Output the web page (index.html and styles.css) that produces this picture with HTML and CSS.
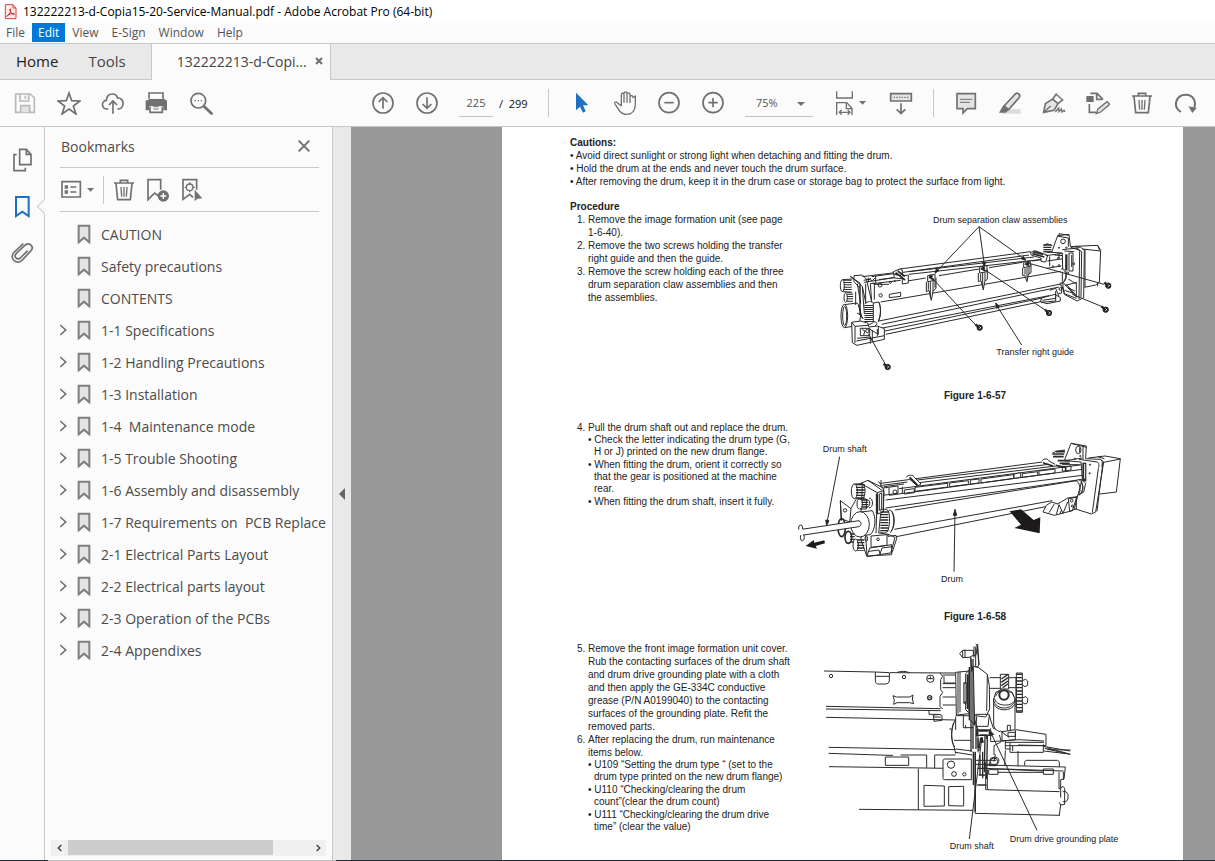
FILE: index.html
```html
<!DOCTYPE html>
<html lang="en">
<head>
<meta charset="utf-8">
<title>132222213-d-Copia15-20-Service-Manual.pdf - Adobe Acrobat Pro (64-bit)</title>
<link rel="stylesheet" href="styles.css">
</head>
<body>
<svg class="defs" aria-hidden="true">
  <symbol id="bm" viewBox="0 0 42 60"><path class="soft" d="M5 5h32v50L21 41 5 55z" stroke-width="6"/></symbol>
  <symbol id="chev" viewBox="0 0 24 36"><path d="M4 3l16 15L4 33" stroke-width="5"/></symbol>
  <symbol id="trash" viewBox="0 0 72 72"><path d="M6 15h60M25 13V7h22v6M12 17l5 48h38l5-48" /><path d="M27 27l2 29M36 27v29M45 27l-2 29" stroke-width="4"/></symbol>
  <symbol id="screw" viewBox="-12 -12 24 24"><path d="M-10-8L6 8" stroke-width="7"/><circle r="8" cx="2" cy="2" fill="#222"/><path d="M0 6l6-5M1-2l5 5" stroke="#fff" stroke-width="2"/></symbol>
</svg>

<header>
  <div class="title">
    <svg class="app" viewBox="0 0 39 48"><path d="M4 2h23l9 10v32H4z" fill="#fbe9e7" stroke="#d3443a" stroke-width="3"/><path d="M27 2v10h9" fill="none" stroke="#d3443a" stroke-width="3"/><path d="M9 36c6-2 12-12 11-20-1-3-4-1-2 4 3 8 9 13 13 11 3-4-12-4-20 3-3 3-3 4-2 2z" fill="none" stroke="#c9211e" stroke-width="3"/></svg>
    <h1>132222213-d-Copia15-20-Service-Manual.pdf - Adobe Acrobat Pro (64-bit)</h1>
  </div>
  <nav class="menu" aria-label="Menu bar">
    <button>File</button><button class="on">Edit</button><button>View</button><button>E-Sign</button><button>Window</button><button>Help</button>
  </nav>
  <nav class="tabs" aria-label="Tabs">
    <button class="tab home">Home</button><button class="tab tools">Tools</button>
    <div class="tab doc"><span>132222213-d-Copi...</span><button aria-label="Close tab"><svg class="ic" viewBox="0 0 24 24"><path d="M3 3l18 18M21 3L3 21" stroke-width="6"/></svg></button></div>
  </nav>
  <div class="toolbar" role="toolbar" aria-label="Main toolbar">
    <div class="group files">
      <button aria-label="Save"><svg class="ic faded" viewBox="39 273 72 72"><path d="M47 282h44l12 12v43H47z"/><path d="M60 283v20h26v-20M76 287v10"/><path class="soft" d="M62 337v-20h27v20"/></svg></button>
      <button aria-label="Star"><svg class="ic" viewBox="171 273 72 72"><path d="M207 279l8 23 25 1-20 15 8 24-21-15-21 15 8-24-20-15 25-1z"/></svg></button>
      <button aria-label="Upload"><svg class="ic" viewBox="303 273 72 72"><path d="M325 327h-3a13 13 0 0 1-3-26c1-12 8-19 18-19 9 0 14 5 16 12 20-2 22 30 3 33h-4M339 341v-36M327 315l12-12 12 12"/></svg></button>
      <button aria-label="Print"><svg class="ic" viewBox="435 273 72 72"><path fill="#707070" stroke="none" d="M437 301h7l4-5h45l4 5h4v30h-11v-12h-43v12h-10z"/><path d="M447 296v-17h42v17M450 320v17h37v-17" fill="#fbfbfb"/><path d="M460 320h16M460 327h16" stroke-width="3"/></svg></button>
      <button aria-label="Find"><svg class="ic" viewBox="567 273 72 72"><circle cx="595" cy="302" r="22"/><path d="M611 318l26 25" stroke-width="8"/><path d="M584 302h4M593 302h4M602 302h4" stroke-width="4"/></svg></button>
    </div>
    <div class="group">
      <button aria-label="Previous page"><svg class="ic" viewBox="33 33 72 72"><circle cx="69" cy="69" r="30"/><path d="M69 86V54M56 66l13-13 13 13"/></svg></button>
      <button aria-label="Next page"><svg class="ic" viewBox="165 33 72 72"><circle cx="201" cy="69" r="30"/><path d="M201 52v32M188 72l13 13 13-13"/></svg></button>
      <input class="pageno" aria-label="Page number" value="225"><span class="total">/&nbsp; 299</span>
    </div>
    <div class="group ruled">
      <button aria-label="Select"><svg class="ic" viewBox="627 33 72 72"><path d="M648 38v53l12-11 9 18 8-4-8-18h16z" fill="#1f6fc0" stroke="none"/></svg></button>
      <button aria-label="Hand"><svg class="ic" viewBox="759 33 72 72"><path d="M784 78V45c0-7 8-7 8 0v23V41c0-7 9-7 9 0v27-24c0-7 9-7 9 0v25-17c0-7 9-7 9 0v0l7-3v25c-1 20-10 29-27 29-14 0-20-8-25-17l-9-14c-3-6 3-8 7-4l12 10" stroke-width="4"/></svg></button>
      <button aria-label="Zoom out"><svg class="ic" viewBox="891 33 72 72"><circle cx="927" cy="68" r="30"/><path d="M913 68h28"/></svg></button>
      <button aria-label="Zoom in"><svg class="ic" viewBox="1023 33 72 72"><circle cx="1059" cy="68" r="30"/><path d="M1045 68h28M1059 54v28"/></svg></button>
      <span class="zoom"><select aria-label="Zoom"><option>75%</option></select></span>
      <button class="wide" aria-label="Fit page"><svg class="ic" viewBox="54 33 108 72"><path d="M65 34v20h47V34M65 105V68h30l16 17v20M94 69v17h17M74 97h30M80 90l-7 7 7 7M98 90l7 7-7 7" stroke-width="4"/><path d="M132 63h21l-10 11z" fill="#707070" stroke="none"/></svg></button>
      <button aria-label="Keyboard"><svg class="ic" viewBox="222 33 72 72"><path class="soft" d="M227 41h62v22h-62z"/><path d="M236 52h46" stroke-width="4" stroke-dasharray="4 4"/><path d="M258 70v29M245 88l13 13 13-13"/></svg></button>
    </div>
    <div class="group ruled">
      <button aria-label="Comment"><svg class="ic" viewBox="417 33 72 72"><path class="soft" d="M426 41h55v45h-24l-13 13V86h-18z"/><path d="M435 58h37M435 67h30" stroke-width="3"/></svg></button>
      <button aria-label="Highlight"><svg class="ic" viewBox="549 33 72 72"><path d="M572 87h45v14h-58z" fill="#ddd" stroke="none"/><path class="soft" d="M567 78l35-37c5-4 16 3 11 11l-32 37z"/><path d="M552 98l13-22 17 14-10 8z" fill="#707070" stroke="none"/></svg></button>
      <button aria-label="Sign"><svg class="ic" viewBox="681 33 72 72"><path class="soft" d="M686 97l5-26 22-14 16 14-12 20zM713 57l12-16M729 71l15-12"/><path d="M687 96l20-18M722 41l22 20" stroke-width="4"/><path d="M721 96l10-12 1 11 7-8 2 9 6-5 3 5" stroke-width="4"/></svg></button>
      <button aria-label="Edit PDF"><svg class="ic" viewBox="813 33 72 72"><path d="M826 40h20l18 18M845 41v17h18M823 72v25h20"/><path d="M814 48h22v18h-22z" fill="#707070" stroke="none"/><path class="soft" d="M844 101l5-14 27-22 8 8-27 23z" stroke-width="4"/></svg></button>
      <button aria-label="Delete"><svg class="ic"><use href="#trash"/></svg></button>
      <button aria-label="Rotate"><svg class="ic" viewBox="1077 33 72 72"><path d="M1098 96c-28-18-13-52 14-52 24 0 33 22 25 42" stroke-width="6"/><path d="M1120 79l25 5-13 15z" fill="#707070" stroke="none"/></svg></button>
    </div>
  </div>
</header>

<div class="work">
  <nav class="rail" aria-label="Panels">
    <button aria-label="Thumbnails"><svg class="ic" viewBox="-3 -1 72 72"><path d="M26 3h20l14 15v31H26zM46 3v15h14M17 19H9v48h34v-9"/></svg></button>
    <button class="on" aria-label="Bookmarks"><svg class="ic blue" viewBox="0 -4 72 72"><path d="M18 5h38v57L37 49 18 62z" stroke-width="6"/></svg></button>
    <button aria-label="Attachments"><svg class="ic" viewBox="0 0 72 72"><path d="M53 32L31 54c-10 8-21-4-12-14l27-25c13-10 27 5 17 17L36 61C20 74-2 58 11 38L40 11"/></svg></button>
  </nav>
  <aside class="panel">
    <div class="head"><h2>Bookmarks</h2><button aria-label="Close panel"><svg class="ic" viewBox="0 0 42 42"><path d="M5 5l32 32M37 5L5 37" stroke-width="6"/></svg></button></div>
    <div class="tools-row">
      <button aria-label="Options"><svg class="ic opt" viewBox="183 158 105 72"><path d="M186 169h55v46h-55z"/><path d="M194 185h12M194 200h12" stroke-width="10" stroke-dasharray="10 9"/><path d="M211 185h18M211 200h18"/><path d="M261 188h21l-10 11z" fill="#707070" stroke="none"/></svg></button>
      <button class="cut" aria-label="Delete bookmark"><svg class="ic"><use href="#trash"/></svg></button>
      <button aria-label="New bookmark"><svg class="ic" viewBox="437 156 72 72"><path d="M475 210l-12-9-20 20v-60h38v30"/><circle cx="489" cy="210" r="17" fill="#707070" stroke="none"/><path d="M480 210h18M489 201v18" stroke="#fff" stroke-width="4"/></svg></button>
      <button aria-label="Find bookmark"><svg class="ic" viewBox="542 156 72 72"><path d="M581 214l-10-9-20 15v-59h41v30"/><circle cx="571" cy="184" r="10" stroke-width="4"/><path d="M571 169v7M571 192v7M556 184h7M579 184h7" stroke-width="4"/><path d="M586 191v35l8-8 15-1z" fill="#707070" stroke="none"/></svg></button>
    </div>
    <ul class="tree">
      <li><i></i><svg class="ic mark"><use href="#bm"/></svg><a href="#">CAUTION</a></li>
      <li><i></i><svg class="ic mark"><use href="#bm"/></svg><a href="#">Safety precautions</a></li>
      <li><i></i><svg class="ic mark"><use href="#bm"/></svg><a href="#">CONTENTS</a></li>
      <li><svg class="ic chev"><use href="#chev"/></svg><svg class="ic mark"><use href="#bm"/></svg><a href="#">1-1 Specifications</a></li>
      <li><svg class="ic chev"><use href="#chev"/></svg><svg class="ic mark"><use href="#bm"/></svg><a href="#">1-2 Handling Precautions</a></li>
      <li><svg class="ic chev"><use href="#chev"/></svg><svg class="ic mark"><use href="#bm"/></svg><a href="#">1-3 Installation</a></li>
      <li><svg class="ic chev"><use href="#chev"/></svg><svg class="ic mark"><use href="#bm"/></svg><a href="#">1-4&nbsp; Maintenance mode</a></li>
      <li><svg class="ic chev"><use href="#chev"/></svg><svg class="ic mark"><use href="#bm"/></svg><a href="#">1-5 Trouble Shooting</a></li>
      <li><svg class="ic chev"><use href="#chev"/></svg><svg class="ic mark"><use href="#bm"/></svg><a href="#">1-6 Assembly and disassembly</a></li>
      <li><svg class="ic chev"><use href="#chev"/></svg><svg class="ic mark"><use href="#bm"/></svg><a href="#">1-7 Requirements on&nbsp; PCB Replace</a></li>
      <li><svg class="ic chev"><use href="#chev"/></svg><svg class="ic mark"><use href="#bm"/></svg><a href="#">2-1 Electrical Parts Layout</a></li>
      <li><svg class="ic chev"><use href="#chev"/></svg><svg class="ic mark"><use href="#bm"/></svg><a href="#">2-2 Electrical parts layout</a></li>
      <li><svg class="ic chev"><use href="#chev"/></svg><svg class="ic mark"><use href="#bm"/></svg><a href="#">2-3 Operation of the PCBs</a></li>
      <li><svg class="ic chev"><use href="#chev"/></svg><svg class="ic mark"><use href="#bm"/></svg><a href="#">2-4 Appendixes</a></li>
    </ul>
    <div class="hscroll"><button aria-label="Scroll left"><svg class="ic" viewBox="0 0 24 24"><path d="M16 3l-9 9 9 9" stroke-width="5"/></svg></button><div class="track"><div class="thumb"></div></div><button aria-label="Scroll right"><svg class="ic" viewBox="0 0 24 24"><path d="M8 3l9 9-9 9" stroke-width="5"/></svg></button></div>
  </aside>
  <button class="splitter" aria-label="Collapse panel"></button>
  <main>
    <article class="page">
      <h3>Cautions:</h3>
      <ul class="dots">
        <li>Avoid direct sunlight or strong light when detaching and fitting the drum.</li>
        <li>Hold the drum at the ends and never touch the drum surface.</li>
        <li>After removing the drum, keep it in the drum case or storage bag to protect the surface from light.</li>
      </ul>
      <section>
        <div>
          <h3>Procedure</h3>
          <ol>
            <li>Remove the image formation unit (see page<br>1-6-40).</li>
            <li>Remove the two screws holding the transfer<br>right guide and then the guide.</li>
            <li>Remove the screw holding each of the three<br>drum separation claw assemblies and then<br>the assemblies.</li>
          </ol>
        </div>
        <figure>
          <svg class="art" viewBox="-96 -15 1068 555">
            <path d="M128 215L600 150M212 192L605 140M240 200L615 156M240 208L640 163M150 224L215 215M130 236L215 226M235 228L290 219M330 212L450 192M480 188L580 172M610 168L650 162"/>
            <path d="M155 291L700 198M150 348L700 236M158 358L690 246M145 372L660 272M168 378L640 279M170 388L635 290M140 385L168 378"/>
            <path d="M100 215l98-12M105 232l90-14M135 238h45M118 218v14M140 212v24" />
            <path d="M75 212l25-2 12 12 16 68M65 214l35 30 10 48M75 212v18l18 20M93 240v90l10 12M110 236v60M128 290l-4-54 12-2v50M118 222l12 5 8-8M85 236l10 60M100 246l6 80M88 300l12 40M104 226l22-5M80 260v40"/>
            <path d="M63 214l30 20v95l-22-12" />
            <ellipse cx="40" cy="242" rx="6" ry="18" fill="#fff"/><path d="M56 224v36" stroke-width="24" stroke-dasharray="3 4"/><path d="M40 224l30-2M42 260l28 4"/>
            <ellipse cx="50" cy="278" rx="5" ry="14"/><path d="M63 266v28" stroke-width="18" stroke-dasharray="3 4"/>
            <path d="M46 300h38v62H46z" fill="#fff" stroke="none"/><path d="M46 299l38-5c14 12 14 50 2 68l-40 6"/><ellipse cx="46" cy="333" rx="10" ry="35" fill="#fff"/><ellipse cx="47" cy="333" rx="6" ry="29" fill="#fff"/>
            <path d="M119 300v52" stroke-width="26" stroke-dasharray="3 3"/><path d="M107 296c10-9 20-7 26-2v58c-8 8-20 8-28 0M133 294l16-3c8 16 8 44-2 60M150 292c7 16 5 40-2 56"/>
            <path d="M68 352l26-4 22 6 4 12 26-3 20 8v32l-82 18-14-8z" fill="#fff"/><path d="M68 352l10 12v50M78 364l40-3M94 370h28v22H94zM82 408l84-16M118 370l30 18v-25M84 400l40-4v20M130 376v34M145 372v22M134 350c12 0 12 10 4 12"/><circle cx="115" cy="378" r="5"/><path d="M100 374l8 4-4 12"/>
            <circle cx="153" cy="240" r="6"/><circle cx="155" cy="271" r="5"/><path d="M181 268l34-6v12l-34 4z"/><circle cx="184" cy="232" r="3"/><circle cx="197" cy="228" r="2"/>
            <path d="M193 200l20-8 7 3v18l18-3v24l-18 3v-16l-24-2z" fill="#fff"/><path d="M200 203l28 22M206 198l22 16M196 207l20 5" stroke-width="5"/>
            <path d="M296 212l22-4v18l-22 4zM292 230v30l8-4 7 30 5-28 9-8v-32M298 232v22M304 230v48M312 228v30M318 226v22M452 186l22-4v18l-22 4zM448 204v26l8-3 7 28 4-26 8-6v-30M455 206v20M461 204v44M468 202v26M584 172l20-4v16l-20 4zM581 188v24l6-2 7 20 4-22 8-5v-26M588 190v18M594 188v32M600 186v22" fill="#fff"/>
            <path d="M300 216l14 8M456 190l14 8M588 176l12 6" stroke-width="6"/><circle cx="306" cy="214" r="4" fill="#222"/><circle cx="463" cy="190" r="4" fill="#222"/><circle cx="597" cy="174" r="4" fill="#222"/>
            <path d="M604 143l14-6 38 14-6 20-14-2v-10l-28-8z" fill="#fff"/><path d="M610 146l36 10M612 140l30 8" stroke-width="5"/>
            <path d="M655 118v24" stroke-width="24" stroke-dasharray="4 3"/><path d="M644 122l10-6 16 6M644 140l26 2"/>
            <path d="M655 142l50-8M650 152l60-8M655 168l55-8M652 190l45-7M662 154v30M676 150l26 2v34M690 140v20"/><circle cx="688" cy="160" r="3"/><circle cx="690" cy="182" r="3"/><circle cx="706" cy="160" r="2"/><circle cx="672" cy="184" r="2"/>
            <path d="M668 142l18-50 34-4 4 36 30 2 12 10-2 142-20 10-38-20-4-24-2-100z" fill="#fff"/><path d="M684 93l34 6v26M690 90v-4l30 5M724 126l28 10-2 146M740 128l18 12-2 136M700 134l52-6"/><circle cx="702" cy="109" r="7"/><circle cx="690" cy="128" r="2"/><circle cx="712" cy="128" r="2"/>
            <path d="M712 148v48" stroke-width="7"/><path d="M720 144h12v54h-12zM728 150v36M706 138l30 2"/><circle cx="734" cy="176" r="3"/><circle cx="716" cy="204" r="3"/>
            <path d="M736 124l70-3 9 15-4 96-11 8-34 7M760 132l54 6M812 136l-6-14M768 132v114M806 232v12"/>
            <path d="M696 192c12-2 18 8 16 20 0 16-10 24-20 22M704 196c10 8 8 28-4 38M700 200v30" fill="#fff"/>
            <path d="M704 234l40 44M708 242l34-10v44M716 248l22 10M700 246l6 20 36 14M712 238l28 32M706 256l32 10M718 222l22 14"/>
            <path d="M638 279l40-11 16 10v10l-40 8-20-6zM640 286l40-6v-22M662 256l18-6 10 24M690 238l8 4v22l-10 2M636 292l44-4v-16"/><circle cx="694" cy="252" r="4"/>
            <path d="M450 65L320 202M450 65L466 178M450 65L586 162M312 222L440 360M470 196L650 316M604 176L825 238M730 268L822 306M118 386L168 476M502 300L578 420" />
            <path d="M325 196l-2-8-5 17 12-9zM466 184l-6-12h10zM590 166l-14-5 7-7zM500 294l3 16 8-6z" fill="#222"/>
            <use href="#screw" x="438" y="354" width="24" height="24"/><use href="#screw" x="646" y="310" width="24" height="24"/><use href="#screw" x="824" y="228" width="24" height="24"/><use href="#screw" x="816" y="300" width="24" height="24"/><use href="#screw" x="162" y="472" width="24" height="24"/>
            <text x="312" y="53">Drum separation claw assemblies</text><text x="502" y="449">Transfer right guide</text>
          </svg>
          <figcaption>Figure 1-6-57</figcaption>
        </figure>
      </section>
      <section>
        <ol start="4">
          <li>Pull the drum shaft out and replace the drum.
            <ul class="dots">
              <li>Check the letter indicating the drum type (G,<br>H or J) printed on the new drum flange.</li>
              <li>When fitting the drum, orient it correctly so<br>that the gear is positioned at the machine<br>rear.</li>
              <li>When fitting the drum shaft, insert it fully.</li>
            </ul>
          </li>
        </ol>
        <figure>
          <svg class="art" viewBox="24 -27 1068 555">
            <path d="M275 160L760 96M280 166L355 156M385 150L780 103M390 158L800 108M330 176L880 104M300 196L880 118M290 210L880 136M290 234L880 148M318 240L862 152M316 298L790 212M312 322L770 230" />
            <path d="M346 180l30-4v12l-30 4zM378 172l98-12v11l-98 13zM482 159l56-7v11l-56 7zM544 150l26-3v12l-26 3zM576 147l98-13v11l-98 14zM700 131l46-6v11l-46 6zM750 123l48-6v12l-48 6zM820 112l26-4v12l-26 4z"/>
            <path d="M268 154l14 20 45-6v22l-46 6M276 150v22M284 176v18M300 174v20M340 170v20M345 162l-60 8"/><circle cx="318" cy="186" r="6"/>
            <path d="M352 142c4-9 22-8 24 0l20 20-10 6-24-20" fill="#fff"/><path d="M362 142l24 24" stroke-width="6"/>
            <path d="M675 132l20-4v14l-20 3zM760 92c4-8 18-6 20 1l18 10" fill="#fff"/><path d="M762 98l30 10M800 106l30 6v12" stroke-width="5"/>
            <path d="M215 160l22-9 44 22 4 12-2 60-8 6-6 58 28 4v6l24-3 2 10-14 42-75 12-18-50 0-80 4-82z" fill="#fff"/>
            <path d="M215 160l50 28-4 122M237 151l42 30M265 188l18-6v64l-18 6zM271 192l7-3v50l-7 2z"/><path d="M264 192v58" stroke-width="7"/>
            <ellipse cx="196" cy="184" rx="9" ry="22" fill="#fff"/><path d="M214 162v44" stroke-width="26" stroke-dasharray="4 4"/><path d="M196 162l26-1c8 10 8 34 0 45l-24 1"/>
            <ellipse cx="212" cy="222" rx="8" ry="15" fill="#fff"/><path d="M228 208v28" stroke-width="20" stroke-dasharray="4 3"/><path d="M212 207h20v30h-18M240 204c14 0 14 30 0 30M238 210c6 2 6 16 0 20"/>
            <path d="M154 212l32 24-4 40-26-10zM154 212l4 60M186 236l14-26" fill="#fff"/><circle cx="168" cy="241" r="5"/>
            <ellipse cx="158" cy="293" rx="11" ry="27" stroke-width="5"/><ellipse cx="178" cy="322" rx="10" ry="18" stroke-width="5"/>
            <path d="M214 246l36-4c12 18 10 58-6 72l-36 4" fill="#fff"/><ellipse cx="213" cy="283" rx="28" ry="38" fill="#fff"/>
            <path d="M286 244v64" stroke-width="24" stroke-dasharray="4 4"/><path d="M274 240c8-4 18-3 24 2 6 20 4 46-2 62-8 6-18 6-24 0M300 240c16-2 20 50 4 68M306 242c14 12 12 50 0 62"/>
            <path d="M190 310v30" stroke-width="14" stroke-dasharray="4 4"/><ellipse cx="200" cy="345" rx="8" ry="18" fill="#fff"/><path d="M215 328v34" stroke-width="22" stroke-dasharray="4 4"/>
            <path d="M38 298L210 272c8 4 8 14 0 18L38 316z" fill="#fff"/><ellipse cx="35" cy="294" rx="6" ry="9" fill="#fff"/><ellipse cx="40" cy="322" rx="6" ry="10" fill="#fff"/><ellipse cx="36" cy="306" rx="8" ry="10" fill="#fff" stroke="none"/>
            <path d="M246 318l48-4v32l-48 6zM230 316l4 62M234 378l8-24 66-10v30zM240 364l30-4 3 12M273 372l6-18 30-4M296 312l22 10-12 44"/><circle cx="267" cy="328" r="4"/><ellipse cx="232" cy="326" rx="4" ry="8"/>
            <path d="M826 92l20-52 46 8-2 38 44 2 10 8-24 150-12 6-52-16 24-90-4-50z" fill="#fff"/><path d="M846 40l46 12M882 48v40M870 88l54 8c8 2 6 10 4 20L910 248M934 88c8 4 6 12 4 22M942 96L924 244M830 92l50-8"/><ellipse cx="868" cy="60" rx="8" ry="11"/><path d="M872 52v16" /><circle cx="858" cy="86" r="2"/><circle cx="874" cy="78" r="2"/><circle cx="903" cy="104" r="2"/><circle cx="902" cy="130" r="2"/>
            <path d="M886 98v56" stroke-width="12"/><path d="M887 102v44" stroke="#fff" stroke-width="3"/>
            <path d="M790 72h36M792 80h32M800 65h28M806 92h36M812 100h30" stroke-width="5"/><path d="M800 64l28-4M790 70l10-6M820 104h52"/>
            <path d="M898 84l50-6 46 8-12 100-50 6M944 97l50-10M926 80l20 6"/>
            <path d="M858 152c16 0 22 36 6 46M868 148c18 6 18 38 2 48M880 150l10 10-6 26-14 8M876 158c8 8 6 22 0 32"/>
            <path d="M772 226l-10 20 34 10 54-14 14-42-28 4-30 18-18-6zM780 248l16-26M802 254l8-30 12 26 14-34M812 252l6-12" fill="#fff"/><circle cx="848" cy="212" r="4"/><circle cx="850" cy="228" r="3"/><path d="M838 206l24-4v34l-20 8z"/>
            <path d="M662 244l34-6 38 32 20-8-2 48-76-16 20-10z" fill="#1d1a1b" stroke="none"/><path d="M50 348l24-18 2 8 30-7 2 9-28 8 4 8z" fill="#1d1a1b" stroke="none"/>
            <path d="M152 80L114 278M495 425L498 246"/><path d="M113 286l-3-16 10 2zM498 238l-5 18h10z" fill="#222"/>
            <text x="101" y="65">Drum shaft</text><text x="456" y="456">Drum</text>
          </svg>
          <figcaption>Figure 1-6-58</figcaption>
        </figure>
      </section>
      <section>
        <ol start="5">
          <li>Remove the front image formation unit cover.<br>Rub the contacting surfaces of the drum shaft<br>and drum drive grounding plate with a cloth<br>and then apply the GE-334C conductive<br>grease (P/N A0199040) to the contacting<br>surfaces of the grounding plate. Refit the<br>removed parts.</li>
          <li>After replacing the drum, run maintenance<br>items below.
            <ul class="dots">
              <li>U109 “Setting the drum type “ (set to the<br>drum type printed on the new drum flange)</li>
              <li>U110 “Checking/clearing the drum<br>count”(clear the drum count)</li>
              <li>U111 “Checking/clearing the drum drive<br>time” (clear the value)</li>
            </ul>
          </li>
        </ol>
        <figure>
          <svg class="art tall" viewBox="-51 21 1068 651">
            <path d="M30 108L184 111M228 113L425 114M36 214L380 221M36 222L380 227M36 247L425 255M44 337L425 344M44 355L225 361M45 395L470 401M135 523L478 526M313 401V525"/>
            <path d="M184 111v24c0 10 4 12 10 12h20c8 0 12-4 12-12v-22zM184 124h42M250 112c12-4 26-4 36 1M378 114l8 10-6 10v30l6 8-8 12v30l8 8M386 120h39M386 146h39M386 158h39M386 186h39M386 210h39M345 225v13h26M358 240l20-2 6 4v14l-24 3zM358 246h22M390 124v20h34"/>
            <circle cx="51" cy="123" r="5"/><circle cx="270" cy="126" r="5"/><circle cx="349" cy="131" r="11"/><path d="M340 131h18M349 124v8"/><circle cx="347" cy="188" r="6" stroke-width="4"/><path d="M345 188h5"/>
            <path d="M237 182l10 4 4 0h36l10-6-2 12 4 14-12-3h-38l-10 5 2-12z"/>
            <path d="M425 112l40-4v128l-38 4zM432 112v124M438 110v122M465 106l-10 10v108l8 8"/><path d="M453 142v64" stroke-width="10"/><path d="M453 146v54" stroke="#fff" stroke-width="3"/><path d="M461 118v104" stroke-width="6"/>
            <path d="M425 242h40M425 254c-14 18-16 60-4 84l4 18M420 262c-10 20-10 56 2 74M420 316h50M425 342l50 6M425 352l50 8M412 282h-6M448 240v38h30M455 270v10M425 245v40"/>
            <path d="M446 46l-9 10 9 12 32-2V46zM446 46v22M453 44v25" fill="#fff"/><path d="M470 64l16-4 5-32 4 60-4 8-14-2-4 16z" fill="#fff"/><path d="M485 28l4 2 6 60M480 34v34M485 35v60"/>
            <path d="M477 72v270M471 70v280M466 96v160M482 100v170" stroke-width="4"/><path d="M478 94l16 4 26 20 6 34 1 70-12 24-30-4-4-8z" fill="#fff"/><path d="M520 118l-2 110M486 238h36M488 244l-2 30h36l4-34M470 256l22 26v70M480 250l12 34M524 236l14 44 22 8 26 20M530 280v40"/>
            <path d="M490 285h36v16h-36zM494 288h28M498 300h20v12M492 310v28M486 276v66M500 308l-6 40M513 302l-2 110M520 302l-2 130" stroke-width="4"/>
            <path d="M527 128h32M527 160h34M584 128h22M584 158h22"/><path d="M559 118h25v44h-25z" fill="#fff"/><path d="M562 132l20-14M562 142l20-14M562 152l20-14M566 158l16-12" stroke-width="4"/>
            <path d="M607 114h18v118h-18z" fill="#fff"/><path d="M616 116v114" stroke-width="18" stroke-dasharray="4 6"/><path d="M627 136l8-3 6 5v13l-8 4-6-4M627 188l8-3 6 5v13l-8 4-6-4M606 128v88" fill="#fff"/>
            <path d="M539 195v72c0 14 8 18 20 24M603 195v88M538 195l8-24h48l10 24c-8 30-56 34-66 0zM540 208c10 22 52 22 62 0" fill="#fff"/><circle cx="570" cy="180" r="14" stroke-width="6" fill="#fff"/><path d="M545 184c8-24 48-26 54 0M542 190c0 24 58 30 62 0M550 170l14-8"/>
            <path d="M564 290l40-6v30l-40 4zM580 286v-15h9v14M582 292h22v12h-22zM606 284l90 14v34l-84-2M530 320l84-6 76 4M574 322h116M574 332h116M588 324v28h100v-24M596 332v16M574 318v24h16M556 300l6 20-22 12v28"/>
            <path d="M688 334l80 14M692 340l74 18M690 348l66 8M700 344l70 1M698 338l72 20"/>
            <path d="M612 348v46M574 346l-2 44M544 358l-4 22M486 376h60M486 388h62M530 370c22-10 34 4 16 22h-20z"/><circle cx="540" cy="380" r="11"/>
            <path d="M510 390l244 6-4 36-10 2v54M510 400l238 8M524 404h28v14h-28zM688 402h30v16h-30zM550 402l140 6M550 412h138M632 392v-10c0-4 3-6 6-6h92c4 0 6 4 6 8v12M515 380v84M515 464l222 6M520 404v58M735 410v52l12-8 5 6v48l-12 2-4-8M746 470h10l6 8v14l-6 8h-10M740 510l-4 30M483 535l255 6M483 352v182M748 410v24" />
            <path d="M214 366h70v25h-70zM225 361h12M260 360h78v38M362 400v-40h62"/><path d="M392 372h80v62h-80c-4 0-5-2-5-6v-50c0-4 2-6 5-6z" fill="#fff"/><circle cx="411" cy="389" r="11"/><circle cx="420" cy="417" r="7"/><circle cx="451" cy="418" r="5"/><path d="M330 451l61 2v60l-61 1zM404 455l45-1v59l-45-1z"/>
            <path d="M478 350v100M484 350v180M490 400h28M494 420h20M490 450h28M498 360v60M506 350v80" stroke-width="4"/>
            <path d="M503 312L466 612M530 292L669 586"/><path d="M504 306l-5 16h9zM527 286l3 16 9-4z" fill="#222"/>
            <text x="407" y="641">Drum shaft</text><text x="587" y="620">Drum drive grounding plate</text>
          </svg>
        </figure>
      </section>
    </article>
  </main>
</div>
<div class="edge"><span></span></div>
</body>
</html>
```
FILE: styles.css
```css
* { box-sizing: border-box; }
body {
  margin: 0;
  height: 100vh;
  display: flex;
  flex-direction: column;
  overflow: hidden;
  background: #fbfbfb;
  color: #4b4b4b;
  font-family: "Open Sans", "Noto Sans", sans-serif;
}
h1, h2, h3, ul, ol, figure { margin: 0; padding: 0; }
button { border: 0; padding: 0; background: none; color: inherit; font: inherit; display: flex; align-items: center; justify-content: center; }
.defs { display: none; }
.ic { width: 24px; height: 24px; fill: none; stroke: #707070; stroke-width: 5; display: block; flex: none; }
.soft { fill: #e4e4e4; }
.faded { stroke: #b9b9b9; }
.blue { stroke: #1f70c1; }

.title { height: 23px; display: flex; align-items: center; gap: 6px; padding-left: 4px; background: #fff; }
.app { width: 13px; height: 16px; }
.title h1 { font-size: 12px; font-weight: 400; color: #000; line-height: 16px; }
.menu { height: 20px; display: flex; gap: 1px; font-size: 12px; color: #555; }
.menu button { padding: 0 6px; height: 19px; }
.menu .on { background: #0078d7; color: #fff; }
.tabs { height: 37px; display: flex; background: #e9e9e9; border-top: 1px solid #c8c8c8; border-bottom: 1px solid #c8c8c8; color: #444; }
.tab { padding-bottom: 2px; font-size: 15px; }
.home { padding-left: 16px; padding-right: 14px; color: #222; }
.tools { padding-left: 16px; padding-right: 25px; }
.doc { display: flex; align-items: center; gap: 8px; width: 180px; height: 36px; padding-left: 25px; font-size: 14px; background: #fbfbfb; border: solid #c8c8c8; border-width: 0 1px; }
.doc .ic { width: 8px; height: 8px; }
.toolbar { height: 47px; display: flex; border-bottom: 1px solid #c8c8c8; padding-left: 3px; }
.group { display: flex; align-items: center; }
.group button { width: 44px; height: 44px; }
.files { margin-right: 138px; }
.ruled { position: relative; margin-left: 19px; padding-left: 11px; }
.ruled::before { content: ""; position: absolute; left: 0; top: 9px; width: 1px; height: 28px; background: #c8c8c8; }
.ruled + .ruled { margin-left: 10px; }
.pageno { width: 34px; height: 27px; margin-left: 10px; padding: 0; border: 0; border-bottom: 1px solid #c0c0c0; background: none; text-align: center; font: inherit; font-size: 11px; color: #555; }
.total { width: 36px; padding-left: 6px; font-size: 11px; color: #111; white-space: nowrap; }
.zoom { position: relative; width: 68px; margin: 0 10px; }
.zoom::after { content: ""; position: absolute; right: 8px; top: 12px; border: 4px solid transparent; border-top-color: #707070; }
.zoom select { width: 100%; height: 27px; padding: 0 0 0 11px; border: 0; border-bottom: 1px solid #c0c0c0; appearance: none; background: none; font: inherit; font-size: 11px; color: #555; }
.group .wide { width: 56px; }
.wide .ic { width: 36px; }

.work { flex: 1; min-height: 0; display: flex; }
.rail { width: 45px; padding-top: 10px; border-right: 1px solid #c8c8c8; }
.rail button { position: relative; width: 44px; height: 46px; }
.rail .on::after { content: ""; position: absolute; right: -6px; top: 18px; width: 10px; height: 10px; background: #fbfbfb; border: solid #c8c8c8; border-width: 0 0 1px 1px; transform: rotate(45deg); }
.panel { width: 288px; display: flex; flex-direction: column; padding: 0 6px; border-right: 1px solid #c8c8c8; }
.head { height: 41px; margin: 0 7px 0 9px; padding: 0 8px 2px 1px; display: flex; align-items: center; justify-content: space-between; border-bottom: 1px solid #c8c8c8; }
.head h2 { font-size: 14px; font-weight: 400; }
.head .ic { width: 14px; height: 14px; }
.tools-row { height: 44px; margin: 0 7px 0 9px; padding-left: 1px; display: flex; align-items: center; gap: 10px; border-bottom: 1px solid #c8c8c8; }
.tools-row .opt { width: 35px; }
.tools-row .cut { height: 28px; margin-left: -3px; padding-left: 8px; border-left: 1px solid #c8c8c8; }
.tree { flex: 1; min-height: 0; padding: 6px 0 0 8px; overflow: hidden; list-style: none; font-size: 14px; }
.tree li { height: 32px; display: flex; align-items: center; white-space: nowrap; }
.tree i, .tree .chev { width: 8px; height: 12px; margin-right: 10px; flex: none; }
.tree .mark { width: 14px; height: 20px; margin-right: 10px; stroke: #808080; }
.tree a { color: inherit; text-decoration: none; }
.hscroll { height: 16px; margin-bottom: 4px; display: flex; background: #f0f0f0; }
.hscroll button { width: 17px; }
.hscroll .ic { width: 8px; height: 8px; stroke: #505050; }
.track { flex: 1; }
.thumb { width: 85%; height: 15px; background: #cdcdcd; }
.splitter { width: 18px; background: #e9e9e9; }
.splitter::before { content: ""; border: 6px solid transparent; border-right-color: #666; border-left-width: 0; }

main { flex: 1; min-width: 0; display: flex; padding: 0 32px 0 151px; background: #989898; overflow: hidden; }
.page { flex: 1; padding: 9px 30px 0 68px; background: #fff; color: #222; font: 10px/13px "Liberation Sans", Arial, sans-serif; }
.page h3 { font-size: 10px; line-height: 13px; }
.dots { list-style: none; }
.dots li { padding-left: 6px; text-indent: -6px; }
.dots li::before { content: "• "; }
.page section { display: grid; grid-template-columns: 227px 1fr; margin-bottom: 19px; }
.page .dots + section { margin-top: 12px; }
.page ol { padding-left: 18px; }
.page ol .dots { line-height: 12px; }
.page ol .dots li { margin-bottom: 1px; }
figcaption { margin-top: 4px; text-align: center; font-weight: 700; }
.art { display: block; width: 356px; height: 185px; margin: 0 auto; fill: none; stroke: #2a2a2a; stroke-width: 3; }
.tall { height: 217px; }
.art text { font-size: 27px; fill: #222; stroke: none; }
.edge { height: 1px; background: #1f2b36; }
.edge span { display: block; width: 288px; height: 1px; margin-left: 48px; background: #c0c0c0; }
```
